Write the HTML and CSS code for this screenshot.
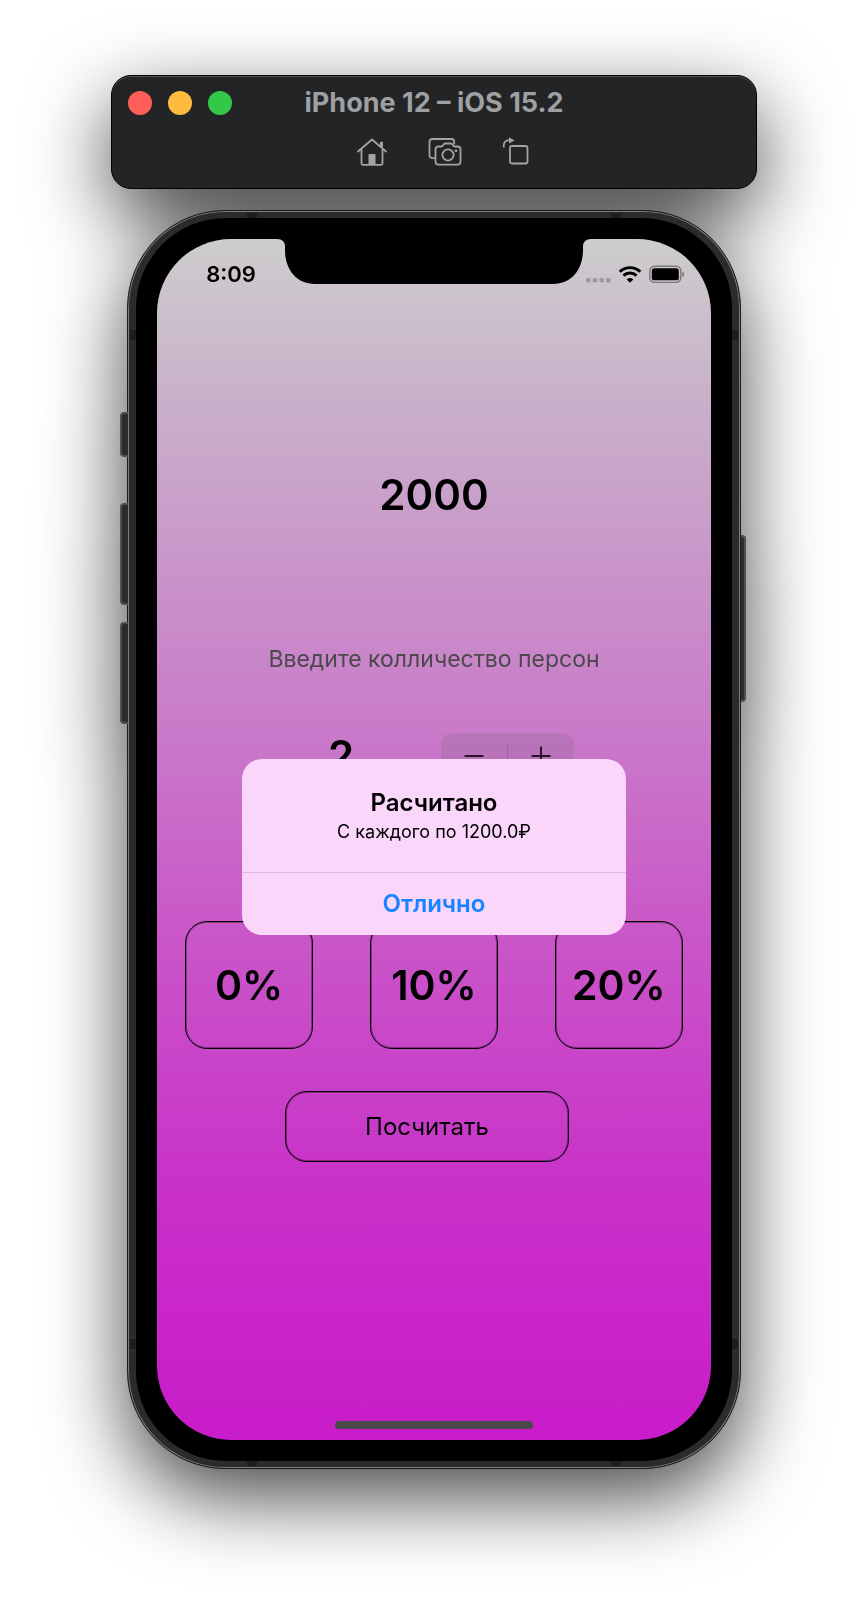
FILE: index.html
```html
<!DOCTYPE html>
<html lang="ru">
<head>
<meta charset="utf-8">
<meta name="viewport" content="width=device-width, initial-scale=1">
<title>iPhone 12 – iOS 15.2</title>
<link rel="stylesheet" href="styles.css">
</head>
<body>
<main class="simulator">
  <header class="toolbar">
    <div class="titlebar">
      <div class="lights">
        <button class="light light-close" type="button" aria-label="Close"></button>
        <button class="light light-min" type="button" aria-label="Minimize"></button>
        <button class="light light-zoom" type="button" aria-label="Zoom"></button>
      </div>
      <h1 class="title">iPhone 12 – iOS 15.2</h1>
    </div>
    <nav class="tools">
      <button class="tool" type="button" aria-label="Home">
        <svg width="32" height="30" viewBox="0 0 32 30" fill="none" stroke="#a2a3a4" stroke-width="1.8" stroke-linejoin="round" stroke-linecap="round"><path d="M2 14.500 16 2.500l14 12M5.500 13v13.300q0 1.500 1.500 1.500h18q1.500 0 1.500-1.500V13M25.500 9.500V5.500"/><path d="M25.500 10V5" stroke-width="3" stroke-linecap="butt"/><path d="M12.500 28V18q0-1 1-1h5q1 0 1 1v10z" fill="#a2a3a4" stroke="none"/></svg>
      </button>
      <button class="tool" type="button" aria-label="Screenshot">
        <svg width="34" height="30" viewBox="0 0 34 30" fill="none" stroke="#a2a3a4" stroke-width="1.800" stroke-linejoin="round" stroke-linecap="round"><path d="M6.500 21.200H4.500q-3 0-3-3V5q0-3 3-3h19q2.700 0 2.700 3v1.500"/><path d="M10.500 9.500h2.700q1 0 1.600-1l.9-1.200q.6-.8 1.600-.8h5.400q1 0 1.600.8l.9 1.200q.6 1 1.600 1h2.700q3 0 3 3v12.200q0 2.900-3 2.900h-19q-3 0-3-2.900V12.500q0-3 3-3z"/><circle cx="20" cy="18" r="5.600"/><circle cx="28" cy="13.800" r="1.400" fill="#a2a3a4" stroke="none"/></svg>
      </button>
      <button class="tool" type="button" aria-label="Rotate">
        <svg width="28" height="30" viewBox="0 0 28 30" fill="none" stroke="#a2a3a4" stroke-width="1.800" stroke-linejoin="round"><rect x="8" y="9" width="17.500" height="17.500" rx="2"/><path d="M1.700 10.500V9q0-5.800 5.800-5.800" /><path d="M7 .2 12.500 3.400 7 6.600z" fill="#a2a3a4" stroke="none"/></svg>
      </button>
    </nav>
  </header>

  <section class="phone">
    <span class="key key-mute"></span>
    <span class="key key-up"></span>
    <span class="key key-down"></span>
    <span class="key key-power"></span>
    <span class="frame">
      <span class="band band-tl"></span><span class="band band-tr"></span>
      <span class="band band-bl"></span><span class="band band-br"></span>
      <span class="band band-lt"></span><span class="band band-lb"></span>
      <span class="band band-rt"></span><span class="band band-rb"></span>
    </span>
    <div class="bezel">
      <div class="screen">
        <svg class="notch" width="314" height="45" viewBox="0 0 314 45"><path d="M0 0H314Q306 0 306 8V11C306 31 294 45 276 45H38C20 45 8 31 8 11V8Q8 0 0 0Z"/></svg>
        <div class="status">
          <time class="clock">8:09</time>
          <div class="indicators">
            <svg width="25" height="20" viewBox="0 0 25 20" fill="#000" fill-opacity=".22"><rect x="0" y="14" width="4.500" height="4.500" rx="1.300"/><rect x="6.700" y="14" width="4.500" height="4.500" rx="1.300"/><rect x="13.400" y="14" width="4.500" height="4.500" rx="1.300"/><rect x="20.100" y="14" width="4.500" height="4.500" rx="1.300"/></svg>
            <svg width="24" height="20" viewBox="0 0 24 20" fill="none" stroke="#000" stroke-width="2.900"><path d="M1.700 7.800a14.700 14.700 0 0 1 20.600 0"/><path d="M5.500 11.600a9.300 9.300 0 0 1 13 0"/><path d="M12 18.700 8.700 15.400q3.300-2.700 6.600 0z" fill="#000" stroke="none"/></svg>
            <svg width="36" height="20" viewBox="0 0 36 20"><rect x=".8" y="2.200" width="31" height="16.200" rx="4.800" fill="none" stroke="#000" stroke-opacity=".4" stroke-width="1.400"/><rect x="2.800" y="4.300" width="27" height="12" rx="2.600"/><path d="M33.400 7.600v5.500q1.800-.8 1.800-2.700t-1.800-2.800z" fill-opacity=".45"/></svg>
          </div>
        </div>

        <form class="calc">
          <input class="bill" type="text" value="2000" aria-label="Сумма счёта">
          <p class="hint" id="hint">Введите колличество персон</p>
          <div class="persons">
            <output class="count" aria-labelledby="hint">2</output>
            <div class="stepper">
              <button class="step" type="button" aria-label="Меньше"><svg width="20" height="20" viewBox="0 0 20 20"><path d="M.5 10h19" stroke="#2a142b" stroke-width="2"/></svg></button>
              <span class="step-divider"></span>
              <button class="step" type="button" aria-label="Больше"><svg width="20" height="20" viewBox="0 0 20 20"><path d="M.5 10h19M10 .5v19" stroke="#2a142b" stroke-width="2"/></svg></button>
            </div>
          </div>
          <div class="tips">
            <button class="tip" type="button">0%</button>
            <button class="tip" type="button">10%</button>
            <button class="tip" type="button">20%</button>
          </div>
          <button class="submit" type="button">Посчитать</button>
        </form>

        <div class="home-bar"></div>

        <div class="alert" role="alertdialog" aria-labelledby="alert-title" aria-describedby="alert-text">
          <div class="alert-body">
            <h2 class="alert-title" id="alert-title">Расчитано</h2>
            <p class="alert-text" id="alert-text">С каждого по 1200.0₽</p>
          </div>
          <button class="alert-action" type="button">Отлично</button>
        </div>
      </div>
    </div>
  </section>
</main>
</body>
</html>
```
FILE: styles.css
```css
*, *::before, *::after { box-sizing: border-box; }

body {
  margin: 0;
  background: #fff;
  color: #000;
  font-family: Inter, "Noto Sans", sans-serif;
}

button, input { font: inherit; color: inherit; }

button {
  margin: 0;
  padding: 0;
  border: 0;
  background: none;
}

h1, h2, p { margin: 0; }

svg { display: block; }

.simulator {
  display: flex;
  flex-direction: column;
  align-items: center;
  gap: 21px;
  max-width: 646px;
  margin: 0 auto;
  padding: 75px 0 150px;
  filter: drop-shadow(0 28px 40px rgba(0, 0, 0, .72));
}

/* Window toolbar */
.toolbar {
  width: 100%;
  padding: 11px 16px 21px;
  border: 1px solid #000;
  border-radius: 20px;
  background: #222426;
  box-shadow: inset 0 1px 0 #515355;
}

.titlebar {
  display: grid;
  grid-template-columns: 1fr auto 1fr;
  align-items: center;
}

.lights { display: flex; gap: 16px; }

.light {
  width: 24px;
  height: 24px;
  border-radius: 50%;
}

.light-close { background: #ff5f5b; }
.light-min { background: #fdbb40; }
.light-zoom { background: #34c84a; }

.title {
  color: #9fa0a2;
  font-size: 27px;
  font-weight: 700;
  line-height: 32px;
}

.tools {
  display: flex;
  justify-content: center;
  gap: 40px;
  padding: 18px 0 0 18px;
}

/* Device */
.phone {
  position: relative;
  width: 95%;
  padding: 7px 8px;
  border: 1px solid #1c1c1c;
  border-radius: 98px;
  background: #2b2b2b;
  box-shadow: inset 0 0 0 1px #7c7c7c;
}

.frame {
  position: absolute;
  inset: 2px;
}

.band { position: absolute; background: #1d1d1d; }
.band-tl, .band-tr, .band-bl, .band-br { width: 10px; height: 5px; }
.band-lt, .band-lb, .band-rt, .band-rb { width: 6px; height: 10px; }
.band-tl { top: 0; left: 117px; }
.band-tr { top: 0; right: 117px; }
.band-bl { bottom: 0; left: 117px; }
.band-br { bottom: 0; right: 117px; }
.band-lt { top: 117px; left: 0; }
.band-rt { top: 117px; right: 0; }
.band-lb { bottom: 117px; left: 0; }
.band-rb { bottom: 117px; right: 0; }

.key {
  position: absolute;
  left: -8px;
  width: 8px;
  border: 2px solid #505050;
  border-right: 0;
  border-radius: 4px 0 0 4px;
  background: #2b2b2b;
}

.key-mute { top: 201px; height: 45px; }
.key-up { top: 292px; height: 102px; }
.key-down { top: 411px; height: 102px; }

.key-power {
  top: 324px;
  left: auto;
  right: -6px;
  width: 5px;
  height: 167px;
  border: 2px solid #505050;
  border-left: 0;
  border-radius: 0 4px 4px 0;
}

.bezel {
  position: relative;
  padding: 21px;
  border-radius: 90px;
  background: #000;
}

.screen {
  position: relative;
  display: flex;
  flex-direction: column;
  overflow: hidden;
  border-radius: 74px;
  background: linear-gradient(#cdcdcd, #c9b3ca 12%, #c978c9 42%, #c95cc8 55%, #c933c8 78%, #ca27ca 88%, #c81cc8);
}

.notch {
  position: absolute;
  top: 0;
  left: 50%;
  transform: translateX(-50%);
}

.status {
  display: flex;
  justify-content: space-between;
  align-items: center;
  padding: 21px 26px 0 49px;
}

.clock {
  font-size: 22px;
  font-weight: 600;
  line-height: 28px;
}

.indicators { display: flex; gap: 7px; }

/* Tip calculator */
.calc {
  display: flex;
  flex-direction: column;
  padding: 181px 28px 278px;
}

.bill {
  width: 100%;
  padding: 0;
  border: 0;
  outline: 0;
  background: none;
  font-size: 42px;
  font-weight: 600;
  line-height: 52px;
  text-align: center;
}

.hint {
  padding-top: 122px;
  color: #4c484c;
  font-size: 23px;
  line-height: 32px;
  text-align: center;
}

.persons {
  display: grid;
  grid-template-columns: 94px 133px;
  gap: 53px;
  align-items: center;
  justify-content: center;
  padding-top: 55px;
}

.count {
  font-size: 42px;
  font-weight: 600;
  line-height: 52px;
  text-align: center;
}

.stepper {
  display: grid;
  grid-template-columns: 1fr 1px 1fr;
  align-items: center;
  height: 46px;
  border-radius: 12px;
  background: rgba(118, 100, 118, .2);
}

.step {
  display: grid;
  place-items: center;
}

.step-divider {
  height: 26px;
  background: rgba(60, 40, 60, .2);
}

.tips {
  display: grid;
  grid-template-columns: repeat(3, 1fr);
  gap: 57px;
  padding-top: 139px;
}

.tip, .submit {
  border: 1px solid #000;
  border-radius: 22px;
  box-shadow: inset 0 0 0 1px rgba(0, 0, 0, .35);
}

.tip {
  height: 128px;
  font-size: 41px;
  font-weight: 600;
}

.submit {
  align-self: center;
  width: 57%;
  height: 71px;
  margin: 42px 14px 0 0;
  font-size: 24px;
}

.home-bar {
  position: absolute;
  bottom: 11px;
  left: 50%;
  width: 198px;
  height: 8px;
  border-radius: 4px;
  background: #4a4a4a;
  transform: translateX(-50%);
}

/* Alert */
.alert {
  position: absolute;
  top: 520px;
  left: 50%;
  width: 384px;
  max-width: 90%;
  overflow: hidden;
  border-radius: 20px;
  background: #f9d6fa;
  text-align: center;
  transform: translateX(-50%);
}

.alert-body {
  padding: 28px 20px 27px;
  border-bottom: 1px solid #e3b6e4;
}

.alert-title {
  font-size: 24px;
  font-weight: 600;
  line-height: 32px;
}

.alert-text {
  font-size: 18px;
  line-height: 26px;
}

.alert-action {
  width: 100%;
  color: #1684ff;
  font-size: 24px;
  font-weight: 600;
  line-height: 62px;
}
```
